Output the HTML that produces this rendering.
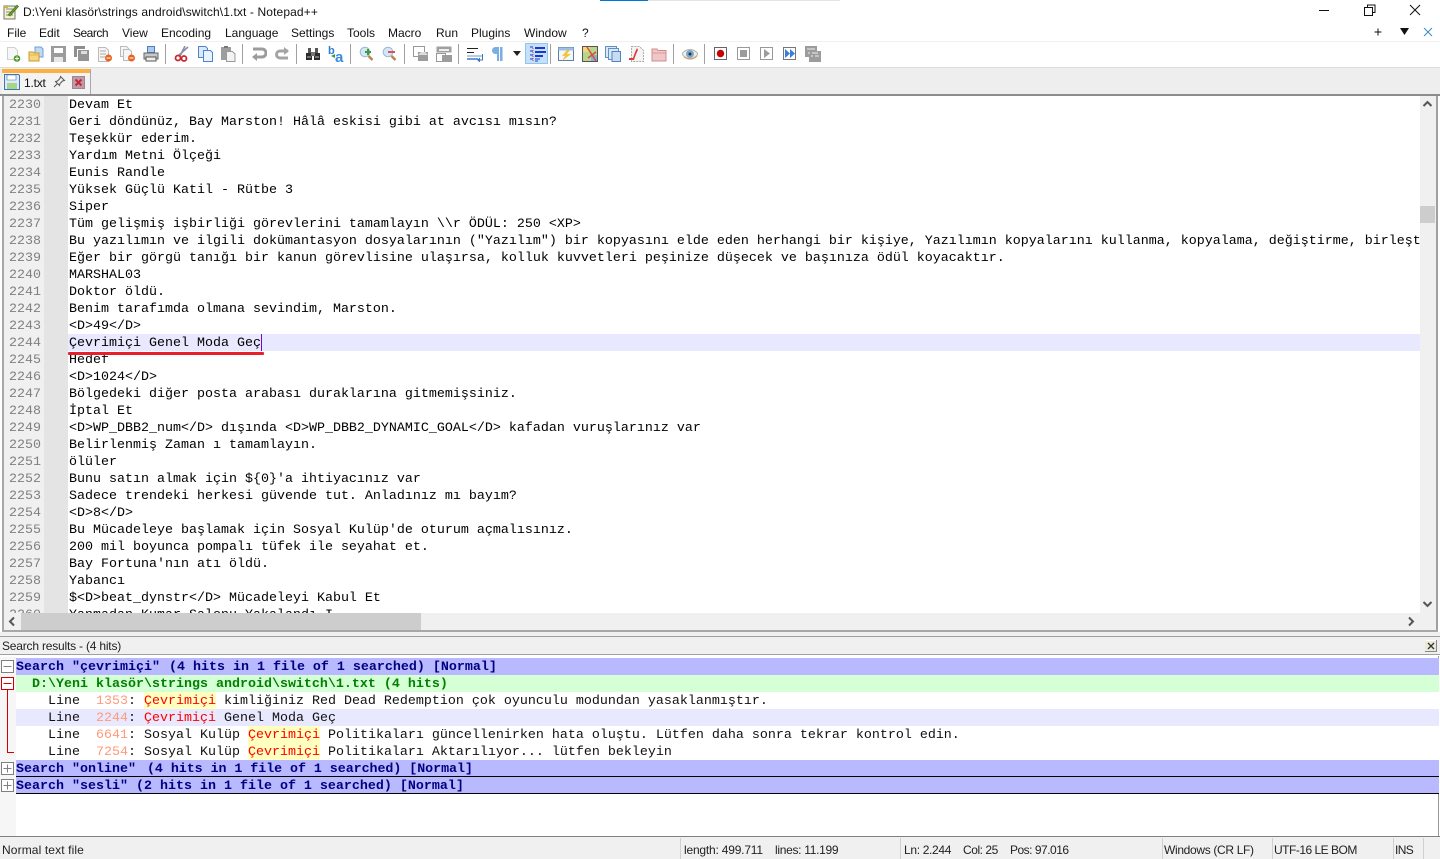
<!DOCTYPE html>
<html lang="tr"><head><meta charset="utf-8"><title>Notepad++</title>
<style>
html,body{margin:0;padding:0;width:1440px;height:859px;overflow:hidden;background:#fff}
body{position:relative;font-family:"Liberation Sans",sans-serif;font-size:12px;color:#000}
.a{position:absolute;white-space:pre}
.m{position:absolute;top:25px;height:16px;line-height:16px;white-space:pre;font-size:12px;color:#111}
.b{position:absolute}
#nums,#code{position:absolute;top:97px;font-family:"Liberation Mono",monospace;font-size:13.33px;line-height:17px;white-space:pre}
#nums{left:9px;color:#808080}
#code{left:69px;color:#000;width:1351px;height:516px;overflow:hidden}
.r{position:absolute;left:16px;height:17px;line-height:19px;font-family:"Liberation Mono",monospace;font-size:13.33px;white-space:pre}
.h{font-weight:bold;color:#000080;background:#b9b9ff;width:1423px;box-sizing:border-box}
.n{color:#ff9a7a}.q{color:#f00}.y{background:#ffffbf;color:#f00;display:inline-block;height:17px;line-height:19px;vertical-align:top}
.t{position:absolute;top:46px;width:16px;height:16px}
.s{position:absolute;top:44px;width:1px;height:20px;background:#a0a0a0}
.st{position:absolute;top:842px;height:16px;line-height:16px;font-size:12px;color:#222;white-space:pre}
.sp{position:absolute;top:838px;width:1px;height:21px;background:#d0d0d0}
</style></head><body>

<!-- title -->
<div class="b" style="left:600px;top:0;width:48px;height:1px;background:#0078d7"></div>
<div class="b" style="left:648px;top:0;width:192px;height:1px;background:#e4e4e4"></div>
<svg class="b" style="left:2px;top:3px" width="17" height="17" viewBox="0 0 17 17"><path d="M2 3h11v13H2z" fill="#f4f2c8" stroke="#777"/><path d="M4 6h7M4 9h7M4 12h7" stroke="#888"/><path d="M6 12L15 2l1.500 1.500L8 13z" fill="#6a9f2a" stroke="#3f6b1a" stroke-width=".6"/><path d="M2 3h4v2H2z" fill="#c8b04a"/></svg>
<div class="a" style="left:23px;top:4px;line-height:16px;font-size:12px;color:#111;letter-spacing:.12px">D:\Yeni klasör\strings android\switch\1.txt - Notepad++</div>
<svg class="b" style="left:1310px;top:0" width="130" height="20" viewBox="0 0 130 20" fill="none" stroke="#111"><path d="M9 10.500h10"/><path d="M54.500 7.500h8v8h-8zM57.500 7.500v-2.500h7.500v7.500h-2.500"/><path d="M100 5l10 10M110 5l-10 10"/></svg>

<!-- menu -->
<div class="m" style="left:7px">File</div><div class="m" style="left:39px">Edit</div><div class="m" style="left:73px;letter-spacing:-.5px">Search</div><div class="m" style="left:122px">View</div><div class="m" style="left:161px">Encoding</div><div class="m" style="left:225px">Language</div><div class="m" style="left:291px">Settings</div><div class="m" style="left:347px">Tools</div><div class="m" style="left:388px">Macro</div><div class="m" style="left:436px">Run</div><div class="m" style="left:471px">Plugins</div><div class="m" style="left:524px">Window</div><div class="m" style="left:582px">?</div>
<svg class="b" style="left:1370px;top:25px" width="68" height="15" viewBox="0 0 68 15" fill="none"><path d="M8 3.500v7M4.500 7h7" stroke="#111"/><path d="M30 3h9l-4.500 7z" fill="#111"/><path d="M54 3l8 8M62 3l-8 8" stroke="#3a8cc8"/></svg>

<!-- toolbar -->
<div class="b" style="left:0;top:41px;width:1440px;height:1px;background:#f0f0f0"></div>
<div class="b" style="left:525px;top:43px;width:23px;height:21px;background:#c6e1f7;box-sizing:border-box;border:1px solid #8fc5ee"></div>

<svg class="t" style="left:5px" viewBox="0 0 16 16"><path d="M2.500 1.500h7l3 3v9h-10z" fill="#f7f7f7" stroke="#d0d0d0"/><circle cx="12" cy="12.500" r="3.300" fill="#4c9a2a"/><path d="M10 12.500h4M12 10.500v4" stroke="#fff"/></svg>
<svg class="t" style="left:28px" viewBox="0 0 16 16"><path d="M7 1h6l2 2v8H7z" fill="#c2d9f2" stroke="#6d9fd8"/><path d="M1 6h4l1 1h5v8H1z" fill="#f7d67e" stroke="#c79a34"/><path d="M1 9h10" stroke="#e2b44c"/></svg>
<svg class="t" style="left:51px" viewBox="0 0 16 16"><path d="M0 0h15v16H0z" fill="#9c9c9c"/><path d="M3 2h9v5H3z" fill="#fff"/><path d="M3 11h9v5H3z" fill="#e8e8e8"/></svg>
<svg class="t" style="left:74px" viewBox="0 0 16 16"><path d="M0 0h11v11H0z" fill="#8e8e8e"/><path d="M3 3h11v11H3z" fill="#fff"/><path d="M4 4h11v11H4z" fill="#949494"/><path d="M7 5h6v3H7z" fill="#ddd"/></svg>
<svg class="t" style="left:97px" viewBox="0 0 16 16"><path d="M1.500 1.500h7l3 3v11h-10z" fill="#f6f6f6" stroke="#bbb"/><path d="M3 5h6M3 8h6M3 11h5" stroke="#aaa"/><circle cx="11.500" cy="12" r="3.500" fill="#e8641c"/><path d="M9.500 12h4" stroke="#fff"/></svg>
<svg class="t" style="left:120px" viewBox="0 0 16 16"><path d="M.5.500h6l2 2v8h-8z" fill="#f6f6f6" stroke="#bbb"/><path d="M3.500 3.500h6l2 2v9h-8z" fill="#f6f6f6" stroke="#bbb"/><circle cx="11.500" cy="12" r="3.500" fill="#e8641c"/><path d="M9.500 12h4" stroke="#fff"/></svg>
<svg class="t" style="left:143px" viewBox="0 0 16 16"><path d="M4.500.500h7v6h-7z" fill="#a9cbef" stroke="#4f7fb8"/><path d="M1 7h14v6H1z" fill="#c8c8c8" stroke="#666"/><path d="M3 11h10v4H3z" fill="#eee" stroke="#555"/></svg>
<div class="s" style="left:165px"></div>
<svg class="t" style="left:174px" viewBox="0 0 16 16"><path d="M11 0L6 10M14 1L4 10" stroke="#8a8fa8" stroke-width="1.600" fill="none"/><circle cx="4" cy="12" r="2.500" fill="none" stroke="#c8282c" stroke-width="1.800"/><circle cx="10" cy="12.500" r="2.500" fill="none" stroke="#c8282c" stroke-width="1.800"/></svg>
<svg class="t" style="left:197px" viewBox="0 0 16 16"><path d="M1.500.500h7l2 2v9h-9z" fill="#dbe9f8" stroke="#4a86cf"/><path d="M6.500 4.500h7l2 2v9h-9z" fill="#eaf2fb" stroke="#4a86cf"/></svg>
<svg class="t" style="left:220px" viewBox="0 0 16 16"><path d="M1 1h10v13H1z" fill="#9d9d9d"/><path d="M4 0h4v2H4z" fill="#777"/><path d="M6.500 5.500h6l2.500 2.500v7.500H6.500z" fill="#f3f3f3" stroke="#999"/></svg>
<div class="s" style="left:242px"></div>
<svg class="t" style="left:251px" viewBox="0 0 16 16"><path d="M2 3h9a3.500 3.500 0 0 1 0 8H3" fill="none" stroke="#9c9c9c" stroke-width="3"/><path d="M6 7v8l-5-4z" fill="#9c9c9c"/></svg>
<svg class="t" style="left:274px" viewBox="0 0 16 16"><path d="M14 5H6a3.300 3.300 0 0 0 0 7h8" fill="none" stroke="#a4a4a4" stroke-width="3"/><path d="M10 1v8l5-4z" fill="#a4a4a4"/></svg>
<div class="s" style="left:296px"></div>
<svg class="t" style="left:305px" viewBox="0 0 16 16"><path d="M1 7h6v7H1zM9 7h6v7H9z" fill="#2c2c2c"/><path d="M3 2h3v5H3zM10 2h3v5h-3z" fill="#565656"/><path d="M6 6h4v4H6z" fill="#777"/><path d="M2 11h4M10 11h4" stroke="#bbb"/></svg>
<svg class="t" style="left:328px;overflow:visible" viewBox="0 0 16 16"><text x="0" y="8" font-family="Liberation Sans" font-size="11" font-weight="bold" fill="#2e7ed8">b</text><text x="7" y="16" font-family="Liberation Sans" font-size="15" font-weight="bold" fill="#3d8be0">a</text><path d="M3 10l4-2v4z" fill="#3a9a3a"/></svg>
<div class="s" style="left:350px"></div>
<svg class="t" style="left:359px" viewBox="0 0 16 16"><circle cx="6" cy="6" r="4.800" fill="#d5e7f7" stroke="#9ab8d4"/><path d="M9.500 10l4 4" stroke="#b8864a" stroke-width="2.500"/><path d="M6 6h6M9 3v6" stroke="#3d9c3d" stroke-width="2"/></svg>
<svg class="t" style="left:382px" viewBox="0 0 16 16"><circle cx="6" cy="6" r="4.800" fill="#d5e7f7" stroke="#9ab8d4"/><path d="M9.500 10l4 4" stroke="#b8864a" stroke-width="2.500"/><path d="M6 6h7" stroke="#e0505a" stroke-width="2"/></svg>
<div class="s" style="left:404px"></div>
<svg class="t" style="left:413px" viewBox="0 0 16 16"><path d="M.5.500h11v10H.5z" fill="#fff" stroke="#999"/><path d="M5 6h10v9H5z" fill="#9c9c9c"/><path d="M5 9l3-3h4l3 3" fill="#ddd"/></svg>
<svg class="t" style="left:436px" viewBox="0 0 16 16"><path d="M.5.500h15v6H.5z" fill="#a0a0a0"/><path d="M3 3h10v2H3z" fill="#eee"/><path d="M.5 7.500h9v8h-9z" fill="#fff" stroke="#999"/><path d="M6 9h10v7H6z" fill="#9c9c9c"/></svg>
<div class="s" style="left:458px"></div>
<svg class="t" style="left:467px" viewBox="0 0 16 16"><path d="M0 2.500h11M0 6.500h7" stroke="#222" stroke-width="1"/><path d="M0 10h16" stroke="#6e9bd0"/><path d="M0 13h11" stroke="#6e9bd0" stroke-width="2"/><path d="M15.500 8v6h-3" fill="none" stroke="#3a76c4"/><path d="M13 11.500v5l-3-2.500z" fill="#3a76c4"/></svg>
<svg class="t" style="left:490px" viewBox="0 0 16 16"><path d="M9 1H5.500a3.500 3.500 0 0 0 0 7H7v7h2zM10 1h2.500v14H10z" fill="#7baee2"/></svg>
<svg class="b" style="left:513px;top:51px" width="9" height="6" viewBox="0 0 9 6"><path d="M0 0h8L4 5z" fill="#222"/></svg>
<svg class="t" style="left:530px" viewBox="0 0 16 16"><path d="M3 2v14" stroke="#c2453a" stroke-dasharray="1 1"/><path d="M5 1h10v2H5zM5 5h11v2H5zM5 9h8v2H5z" fill="#1a38d8"/><path d="M0 1h3M0 5h3M0 9h3M0 13h3M5 13h5M5 15h3" stroke="#1a38d8"/></svg>
<div class="s" style="left:550px"></div>
<svg class="t" style="left:558px" viewBox="0 0 16 16"><path d="M.5 1.500h15v13H.5z" fill="#f3f7fc" stroke="#5c7fa8"/><path d="M.5 1.500h15v3H.5z" fill="#9dbfe4"/><path d="M9 4l-5 6h3l-3 5 9-7H9l3-4z" fill="#eec63e"/></svg>
<svg class="t" style="left:582px" viewBox="0 0 16 16"><path d="M.5.500h15v15H.5z" fill="#b7d68b" stroke="#555"/><path d="M1 1h7v5H1z" fill="#f0d77b"/><path d="M9 9h6v6H9z" fill="#8ab0d8"/><path d="M5 1l9 14M14 6L6 12" stroke="#d84c3c" stroke-width="1.500"/></svg>
<svg class="t" style="left:605px" viewBox="0 0 16 16"><path d="M.5.500h11v11H.5z" fill="#dbe8f7" stroke="#5f90c9"/><path d="M3.500 2.500h10v11h-10z" fill="#dbe8f7" stroke="#5f90c9"/><path d="M7 5.500h8.500v10H7z" fill="#c9dcf4" stroke="#4f83c4"/></svg>
<svg class="t" style="left:628px" viewBox="0 0 16 16"><path d="M3.500.500h8l4 4v11h-12z" fill="#f4f4f4" stroke="#aaa" stroke-dasharray="2 1"/><path d="M9 2C7 6 6 9 5 12H1v2h5c1-3 2-6 4-10z" fill="#dc3c3c"/></svg>
<svg class="t" style="left:651px" viewBox="0 0 16 16"><path d="M1 3h5l1 1.500h8V15H1z" fill="#f0c6c6" stroke="#cc8e8e"/><path d="M1 7h14" stroke="#d89a9a"/></svg>
<div class="s" style="left:673px"></div>
<svg class="t" style="left:682px" viewBox="0 0 16 16"><path d="M0 8c4-6 12-6 16 0-4 6-12 6-16 0z" fill="#eef0ea" stroke="#b8b49a"/><circle cx="8" cy="8" r="4" fill="#7ea6d4"/><circle cx="8" cy="8" r="1.500" fill="#234"/><path d="M2 11c4 3 9 3 13-1" stroke="#d8a16a" fill="none"/></svg>
<div class="s" style="left:704px"></div>
<svg class="t" style="left:713px" viewBox="0 0 16 16"><path d="M1.500 1.500h12v12h-12z" fill="#fff" stroke="#666"/><circle cx="7.500" cy="7.500" r="3.700" fill="#c80000"/></svg>
<svg class="t" style="left:736px" viewBox="0 0 16 16"><path d="M1.500 1.500h12v12h-12z" fill="#fff" stroke="#999"/><path d="M4 4h7v7H4z" fill="#9c9c9c"/></svg>
<svg class="t" style="left:759px" viewBox="0 0 16 16"><path d="M1.500 1.500h12v12h-12z" fill="#fff" stroke="#999"/><path d="M5 3l6 4.500L5 12z" fill="#9c9c9c"/></svg>
<svg class="t" style="left:782px" viewBox="0 0 16 16"><path d="M1.500 1.500h12v12h-12z" fill="#fff" stroke="#777"/><path d="M3 3l5 4.500L3 12zM8 3l5 4.500L8 12z" fill="#3a7edc"/></svg>
<svg class="t" style="left:805px" viewBox="0 0 16 16"><path d="M0 0h12v11H0z" fill="#9c9c9c"/><path d="M4 5h12v11H4z" fill="#9c9c9c"/><path d="M2 3h8M3 7h2M7 7h6M6 10h2M10 10h4" stroke="#eee"/></svg>
<div class="b" style="left:0;top:67px;width:1440px;height:1px;background:#dcdcdc"></div>

<!-- tab bar -->
<div class="b" style="left:0;top:68px;width:1440px;height:26px;background:#eeeeee"></div>
<div class="b" style="left:2px;top:69px;width:89px;height:25px;background:#f3f3f3;border-right:1px solid #a8a8a8;box-sizing:border-box"></div>
<div class="b" style="left:2px;top:69px;width:88px;height:4px;background:#fbb040"></div>
<svg class="b" style="left:4px;top:74px" width="16" height="16" viewBox="0 0 16 16"><path d="M.5.500h14l1 1v14H.5z" fill="#dfeaf7" stroke="#3f74b8"/><path d="M3 1h9v5H3z" fill="#fff" stroke="#3f74b8" stroke-width=".6"/><path d="M3 9h10v6H3z" fill="#a5d685"/></svg>
<div class="a" style="left:24px;top:75px;line-height:16px;color:#111;font-size:12px;letter-spacing:-.2px">1.txt</div>
<svg class="b" style="left:53px;top:75px" width="13" height="13" viewBox="0 0 13 13" fill="none" stroke="#555"><path d="M7.500 1.500l4 4-2 .500-2.500 2.500-.500 2L2.500 6.500l2-.500 2.500-2.500zM4.500 8.500L1 12"/></svg>
<svg class="b" style="left:72px;top:76px" width="13" height="13" viewBox="0 0 13 13"><path d="M.5.500h12v12H.5z" fill="#c09aaa" stroke="#9a8a90"/><path d="M3.500 3.500l6 6M9.500 3.500l-6 6" stroke="#c42838" stroke-width="2"/></svg>

<!-- editor frame -->
<div class="b" style="left:0;top:94px;width:1440px;height:2px;background:#8c8c8c"></div>
<div class="b" style="left:2px;top:96px;width:2px;height:535px;background:#a8a8a8"></div>
<div class="b" style="left:4px;top:96px;width:40px;height:517px;background:#f0f0f0"></div>
<div class="b" style="left:44px;top:96px;width:24px;height:517px;background:#e4e4e4"></div>
<div class="b" style="left:68px;top:334px;width:1352px;height:17px;background:#e8e8ff"></div>

<div id="nums">2230
2231
2232
2233
2234
2235
2236
2237
2238
2239
2240
2241
2242
2243
2244
2245
2246
2247
2248
2249
2250
2251
2252
2253
2254
2255
2256
2257
2258
2259
2260</div>
<div class="b" style="left:4px;top:613px;width:64px;height:18px;background:#f0f0f0"></div>
<div id="code">Devam Et
Geri döndünüz, Bay Marston! Hâlâ eskisi gibi at avcısı mısın?
Teşekkür ederim.
Yardım Metni Ölçeği
Eunis Randle
Yüksek Güçlü Katil - Rütbe 3
Siper
Tüm gelişmiş işbirliği görevlerini tamamlayın \\r ÖDÜL: 250 &lt;XP&gt;
Bu yazılımın ve ilgili dokümantasyon dosyalarının ("Yazılım") bir kopyasını elde eden herhangi bir kişiye, Yazılımın kopyalarını kullanma, kopyalama, değiştirme, birleştirme hakkı
Eğer bir görgü tanığı bir kanun görevlisine ulaşırsa, kolluk kuvvetleri peşinize düşecek ve başınıza ödül koyacaktır.
MARSHAL03
Doktor öldü.
Benim tarafımda olmana sevindim, Marston.
&lt;D&gt;49&lt;/D&gt;
Çevrimiçi Genel Moda Geç
Hedef
&lt;D&gt;1024&lt;/D&gt;
Bölgedeki diğer posta arabası duraklarına gitmemişsiniz.
İptal Et
&lt;D&gt;WP_DBB2_num&lt;/D&gt; dışında &lt;D&gt;WP_DBB2_DYNAMIC_GOAL&lt;/D&gt; kafadan vuruşlarınız var
Belirlenmiş Zaman ı tamamlayın.
ölüler
Bunu satın almak için ${0}'a ihtiyacınız var
Sadece trendeki herkesi güvende tut. Anladınız mı bayım?
&lt;D&gt;8&lt;/D&gt;
Bu Mücadeleye başlamak için Sosyal Kulüp'de oturum açmalısınız.
200 mil boyunca pompalı tüfek ile seyahat et.
Bay Fortuna'nın atı öldü.
Yabancı
$&lt;D&gt;beat_dynstr&lt;/D&gt; Mücadeleyi Kabul Et
Yanmadan Kumar Salonu Yakalandı I</div>
<div class="b" style="left:261px;top:334px;width:1px;height:17px;background:#7a00e0"></div>
<div class="b" style="left:68px;top:352px;width:196px;height:3px;background:#e8202c;border-radius:1px"></div>

<!-- v scrollbar -->
<div class="b" style="left:1420px;top:96px;width:16px;height:517px;background:#f0f0f0"></div>
<div class="b" style="left:1420px;top:206px;width:15px;height:17px;background:#cdcdcd"></div>
<svg class="b" style="left:1422px;top:100px" width="11" height="8" viewBox="0 0 11 8"><path d="M1.500 6L5.500 2l4 4" fill="none" stroke="#555" stroke-width="2"/></svg>
<svg class="b" style="left:1422px;top:600px" width="11" height="8" viewBox="0 0 11 8"><path d="M1.500 2l4 4 4-4" fill="none" stroke="#555" stroke-width="2"/></svg>
<!-- h scrollbar -->
<div class="b" style="left:4px;top:613px;width:1432px;height:18px;background:#f0f0f0"></div>
<div class="b" style="left:21px;top:613px;width:400px;height:17px;background:#cdcdcd"></div>
<svg class="b" style="left:8px;top:616px" width="8" height="11" viewBox="0 0 8 11"><path d="M6 1.500l-4 4 4 4" fill="none" stroke="#555" stroke-width="2"/></svg>
<svg class="b" style="left:1407px;top:616px" width="8" height="11" viewBox="0 0 8 11"><path d="M2 1.500l4 4-4 4" fill="none" stroke="#555" stroke-width="2"/></svg>
<div class="b" style="left:1436px;top:96px;width:2px;height:536px;background:#a0a0a0"></div>
<div class="b" style="left:2px;top:630px;width:1436px;height:2px;background:#a8a8a8"></div>

<!-- search panel -->
<div class="b" style="left:0;top:632px;width:1440px;height:5px;background:#f0f0f0"></div>
<div class="b" style="left:0;top:636px;width:1440px;height:19px;background:#f0f0f0;border-top:1px solid #a0a0a0;border-bottom:1px solid #a0a0a0;box-sizing:border-box"></div>
<div class="a" style="left:2px;top:638px;line-height:16px;color:#222;font-size:12px;letter-spacing:-.2px">Search results - (4 hits)</div>
<svg class="b" style="left:1425px;top:640px" width="12" height="12" viewBox="0 0 12 12"><path d="M0 0h12v12H0z" fill="#ece9d8"/><path d="M.5.500h11v11" fill="none" stroke="#fff"/><path d="M11.500 0v11.500H0" fill="none" stroke="#888"/><path d="M3 3l6 6M9 3l-6 6" stroke="#333" stroke-width="1.300"/></svg>

<div class="b" style="left:0;top:657px;width:1440px;height:180px;background:#fff"></div>
<div class="b" style="left:0;top:657px;width:16px;height:180px;background:#f6f6f6"></div>
<div class="b" style="left:1438px;top:656px;width:1px;height:180px;background:#999"></div>

<div class="r h" style="top:658px">Search "çevrimiçi" <span style="margin-left:1px">(4 hits in 1 file of 1 searched) [Normal]</span></div>
<div class="r" style="top:675px;width:1423px;background:#d5ffd5;color:#008000;font-weight:bold">  D:\Yeni klasör\strings android\switch\1.txt (4 hits)</div>
<div class="r" style="top:692px;width:1423px;background:#fff;color:#111">    Line  <span class="n">1353</span>: <span class="y">Çevrimiçi</span> kimliğiniz Red Dead Redemption çok oyunculu modundan yasaklanmıştır.</div>
<div class="r" style="top:709px;width:1423px;background:#e8e8ff;color:#111">    Line  <span class="n">2244</span>: <span class="q">Çevrimiçi</span> Genel Moda Geç</div>
<div class="r" style="top:726px;width:1423px;background:#fff;color:#111">    Line  <span class="n">6641</span>: Sosyal Kulüp <span class="y">Çevrimiçi</span> Politikaları güncellenirken hata oluştu. Lütfen daha sonra tekrar kontrol edin.</div>
<div class="r" style="top:743px;width:1423px;background:#fff;color:#111">    Line  <span class="n">7254</span>: Sosyal Kulüp <span class="y">Çevrimiçi</span> Politikaları Aktarılıyor... lütfen bekleyin</div>
<div class="r h" style="top:760px;border-bottom:1px solid #000">Search "online" <span style="margin-left:3px;letter-spacing:-.05px">(4 hits in 1 file of 1 searched) [Normal]</span></div>
<div class="r h" style="top:777px;border-bottom:1px solid #000">Search "sesli" (2 hits in 1 file of 1 searched) [Normal]</div>

<svg class="b" style="left:1px;top:658px" width="15" height="137" viewBox="0 0 15 137" fill="none">
<path d="M.5 2.500h12v12H.5z" fill="#fff" stroke="#808080"/><path d="M2.500 8.500h8" stroke="#808080"/>
<path d="M.5 19.500h12v12H.5z" fill="#fff" stroke="#d00000"/><path d="M2.500 25.500h8" stroke="#d00000"/>
<path d="M6.500 32v62.500h6.500" stroke="#d00000"/>
<path d="M.5 104.500h12v12H.5z" fill="#fff" stroke="#808080"/><path d="M2.500 110.500h8M6.500 106.500v8" stroke="#808080"/>
<path d="M.5 121.500h12v12H.5z" fill="#fff" stroke="#808080"/><path d="M2.500 127.500h8M6.500 123.500v8" stroke="#808080"/>
</svg>

<!-- status bar -->
<div class="b" style="left:0;top:836px;width:1440px;height:1px;background:#808080"></div>
<div class="b" style="left:0;top:837px;width:1440px;height:22px;background:#f0f0f0"></div>
<div class="sp" style="left:680px"></div><div class="sp" style="left:900px"></div><div class="sp" style="left:1162px"></div><div class="sp" style="left:1272px"></div><div class="sp" style="left:1393px"></div><div class="sp" style="left:1423px"></div>
<div class="st" style="left:2px;letter-spacing:.12px">Normal text file</div>
<div class="st" style="left:684px;letter-spacing:-.2px">length: 499.711</div>
<div class="st" style="left:775px;letter-spacing:-.3px">lines: 11.199</div>
<div class="st" style="left:904px;letter-spacing:-.33px">Ln: 2.244</div>
<div class="st" style="left:963px;letter-spacing:-.45px">Col: 25</div>
<div class="st" style="left:1010px;letter-spacing:-.5px">Pos: 97.016</div>
<div class="st" style="left:1164px;letter-spacing:-.33px">Windows (CR LF)</div>
<div class="st" style="left:1274px;letter-spacing:-.5px">UTF-16 LE BOM</div>
<div class="st" style="left:1395px;letter-spacing:-.6px">INS</div>
</body></html>
